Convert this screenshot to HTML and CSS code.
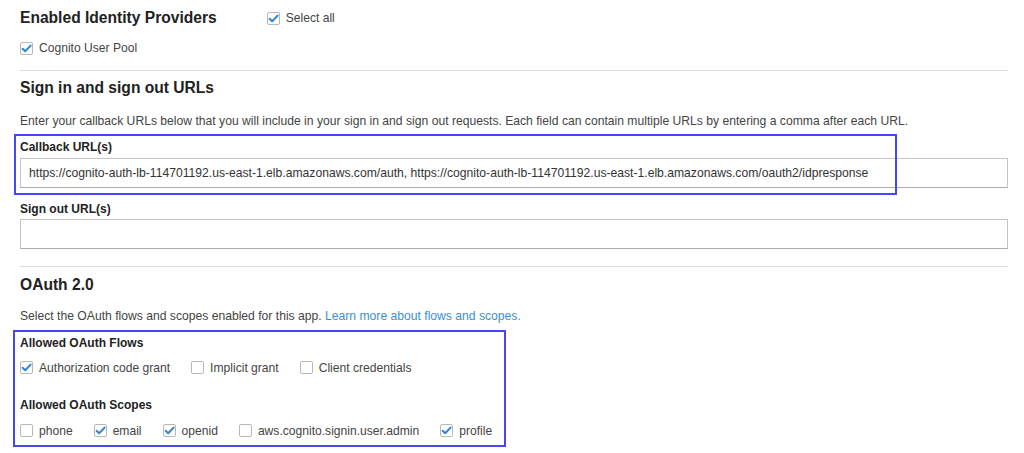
FILE: index.html
```html
<!DOCTYPE html>
<html>
<head>
<meta charset="utf-8">
<link rel="stylesheet" href="styles.css">
</head>
<body>
<div class="page">
  <div class="row-top">
    <h2 class="heading">Enabled Identity Providers</h2>
    <label class="check"><span class="box on"><svg viewBox="0 0 13 13"><path d="M2.6 6.8 L5.2 9.3 L10.6 3.6" /></svg></span>Select all</label>
  </div>
  <div class="row-providers">
    <label class="check"><span class="box on"><svg viewBox="0 0 13 13"><path d="M2.6 6.8 L5.2 9.3 L10.6 3.6" /></svg></span>Cognito User Pool</label>
  </div>
  <div class="divider first"></div>

  <h2 class="heading h-sign">Sign in and sign out URLs</h2>
  <p class="desc d-sign">Enter your callback URLs below that you will include in your sign in and sign out requests. Each field can contain multiple URLs by entering a comma after each URL.</p>
  <div class="field-label fl-callback">Callback URL(s)</div>
  <div class="input">https://cognito-auth-lb-114701192.us-east-1.elb.amazonaws.com/auth, https://cognito-auth-lb-114701192.us-east-1.elb.amazonaws.com/oauth2/idpresponse</div>
  <div class="field-label fl-signout">Sign out URL(s)</div>
  <div class="input input-empty"></div>
  <div class="divider second"></div>

  <h2 class="heading h-oauth">OAuth 2.0</h2>
  <p class="desc d-oauth">Select the OAuth flows and scopes enabled for this app. <a class="link">Learn more about flows and scopes.</a></p>
  <div class="field-label fl-flows">Allowed OAuth Flows</div>
  <div class="check-row cr-flows">
    <label class="check"><span class="box on"><svg viewBox="0 0 13 13"><path d="M2.6 6.8 L5.2 9.3 L10.6 3.6" /></svg></span>Authorization code grant</label>
    <label class="check"><span class="box"></span>Implicit grant</label>
    <label class="check"><span class="box"></span>Client credentials</label>
  </div>
  <div class="field-label fl-scopes">Allowed OAuth Scopes</div>
  <div class="check-row cr-scopes">
    <label class="check"><span class="box"></span>phone</label>
    <label class="check"><span class="box on"><svg viewBox="0 0 13 13"><path d="M2.6 6.8 L5.2 9.3 L10.6 3.6" /></svg></span>email</label>
    <label class="check"><span class="box on"><svg viewBox="0 0 13 13"><path d="M2.6 6.8 L5.2 9.3 L10.6 3.6" /></svg></span>openid</label>
    <label class="check"><span class="box"></span>aws.cognito.signin.user.admin</label>
    <label class="check"><span class="box on"><svg viewBox="0 0 13 13"><path d="M2.6 6.8 L5.2 9.3 L10.6 3.6" /></svg></span>profile</label>
  </div>

  <div class="annot annot-callback"></div>
  <div class="annot annot-oauth"></div>
</div>
</body>
</html>
```

FILE: styles.css
```css
* { box-sizing: border-box; }
html, body { margin: 0; padding: 0; background: #fff; }
body {
  font-family: "Liberation Sans", Arial, sans-serif;
  color: #444;
  font-size: 12px;
}
.page {
  position: relative;
  width: 1024px;
  height: 453px;
  padding: 8px 16px 0 20px;
  overflow: hidden;
}
.heading {
  margin: 0;
  font-size: 15.6px;
  line-height: 20px;
  font-weight: bold;
  color: #222;
}
.row-top {
  display: flex;
  align-items: center;
  gap: 50px;
}
.row-providers { margin-top: 11px; }
.check {
  display: inline-flex;
  align-items: center;
  gap: 6px;
  font-size: 12.1px;
  line-height: 18px;
  color: #444;
}
.box {
  display: inline-block;
  width: 13px;
  height: 13px;
  border: 1px solid #b8b8b8;
  border-radius: 2px;
  background: #fff;
  position: relative;
  flex: none;
}
.box svg {
  position: absolute;
  left: -1px;
  top: -1px;
  width: 13px;
  height: 13px;
}
.box svg path {
  fill: none;
  stroke: #2f86d6;
  stroke-width: 2;
  stroke-linecap: round;
  stroke-linejoin: round;
}
.divider {
  height: 1px;
  background: #dcdcdc;
  width: 988px;
}
.divider.first { margin-top: 12px; }
.divider.second { margin-top: 17px; }
.h-sign { margin-top: 7px; }
.desc {
  margin: 0;
  font-size: 12.15px;
  line-height: 18px;
  color: #444;
}
.d-sign { margin-top: 14px; }
.field-label {
  font-size: 12px;
  line-height: 16px;
  font-weight: bold;
  color: #222;
}
.fl-callback { margin-top: 9px; }
.input {
  margin-top: 3px;
  width: 988px;
  height: 30px;
  border: 1px solid #c4c6c6;
  border-bottom-color: #a9abab;
  padding: 0 8px;
  font-size: 12.15px;
  line-height: 28px;
  color: #333;
  white-space: nowrap;
  overflow: hidden;
}
.fl-signout { margin-top: 13px; }
.input-empty { margin-top: 2px; }
.h-oauth { margin-top: 8px; }
.d-oauth { margin-top: 12px; }
.link { color: #3b8fd4; text-decoration: none; }
.fl-flows { margin-top: 10px; }
.check-row {
  display: flex;
  gap: 21px;
}
.cr-flows { margin-top: 8px; }
.fl-scopes { margin-top: 20px; }
.cr-scopes { margin-top: 9px; }
.annot {
  position: absolute;
  border: 2px solid #4646f2;
  pointer-events: none;
}
.annot-callback { left: 14px; top: 134px; width: 883px; height: 61px; }
.annot-oauth { left: 13px; top: 330px; width: 493px; height: 117px; }
```
